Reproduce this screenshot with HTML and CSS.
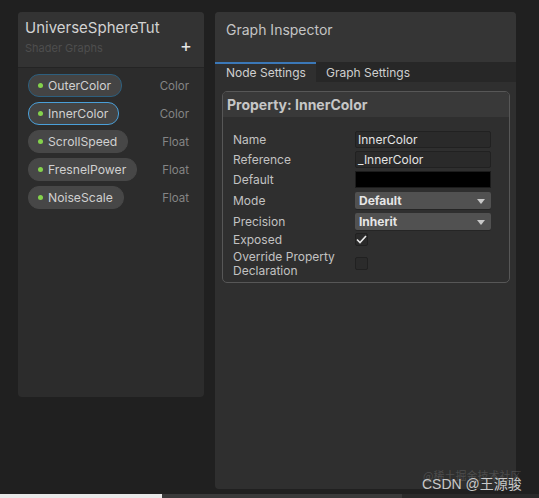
FILE: index.html
```html
<!DOCTYPE html>
<html>
<head>
<meta charset="utf-8">
<link rel="stylesheet" href="styles.css">
</head>
<body>
<div class="stage">
  <div class="blackboard">
    <div class="bb-header">
      <div class="bb-title">UniverseSphereTut</div>
      <div class="bb-sub-row">
        <span class="bb-sub">Shader Graphs</span>
        <span class="bb-add">+</span>
      </div>
    </div>
    <div class="bb-list">
      <div class="prop-row"><span class="pill sel-dim"><i class="dot"></i>OuterColor</span><span class="ptype">Color</span></div>
      <div class="prop-row"><span class="pill sel"><i class="dot"></i>InnerColor</span><span class="ptype">Color</span></div>
      <div class="prop-row"><span class="pill"><i class="dot"></i>ScrollSpeed</span><span class="ptype">Float</span></div>
      <div class="prop-row"><span class="pill"><i class="dot"></i>FresnelPower</span><span class="ptype">Float</span></div>
      <div class="prop-row"><span class="pill"><i class="dot"></i>NoiseScale</span><span class="ptype">Float</span></div>
    </div>
  </div>
  <div class="inspector">
    <div class="in-header">Graph Inspector</div>
    <div class="tabs">
      <div class="tab active">Node Settings</div>
      <div class="tab">Graph Settings</div>
    </div>
    <div class="propbox">
      <div class="pb-title">Property: InnerColor</div>
      <div class="fields">
        <div class="frow"><span class="flabel">Name</span><span class="text-field">InnerColor</span></div>
        <div class="frow"><span class="flabel">Reference</span><span class="text-field">_InnerColor</span></div>
        <div class="frow"><span class="flabel">Default</span><span class="color-field"></span></div>
        <div class="frow drop"><span class="flabel">Mode</span><span class="dropdown">Default<i class="arrow"></i></span></div>
        <div class="frow drop"><span class="flabel">Precision</span><span class="dropdown">Inherit<i class="arrow"></i></span></div>
        <div class="frow short"><span class="flabel">Exposed</span><span class="check"><svg width="11" height="9" viewBox="0 0 11 9"><path d="M1 4.5 L4 7.5 L10 1" fill="none" stroke="#e8e8e8" stroke-width="1.6"/></svg></span></div>
        <div class="frow tall"><span class="flabel">Override Property<br>Declaration</span><span class="check empty"></span></div>
      </div>
    </div>
  </div>
</div>
<div class="watermark"><span class="wm-back">@稀土掘金技术社区</span><span class="wm-front">CSDN @王源骏</span></div>
<div class="bottom-strip"><span class="bs1"></span><span class="bs2"></span><span class="bs3"></span></div>
</body>
</html>
```
FILE: styles.css
```css
html, body {
  margin: 0;
  padding: 0;
  background: #202020;
  font-family: Inter, "Noto Sans", sans-serif;
  width: 539px;
  height: 498px;
  overflow: hidden;
}
body { position: relative; }
.stage {
  display: flex;
  align-items: flex-start;
  gap: 11px;
  padding: 12px 0 0 18px;
  height: 482px;
  box-sizing: border-box;
}
.blackboard {
  width: 186px;
  height: 385px;
  background: #2c2c2c;
  border-radius: 4px;
  display: flex;
  flex-direction: column;
  overflow: hidden;
}
.bb-header {
  background: #333333;
  height: 56px;
  border-bottom: 1px solid #242424;
  padding: 6px 12px 0 7px;
  box-sizing: border-box;
}
.bb-title {
  color: #d2d2d2;
  font-size: 15px;
  line-height: 20px;
}
.bb-sub-row {
  display: flex;
  justify-content: space-between;
  align-items: center;
  margin-top: 2px;
}
.bb-sub {
  color: #4e4e4e;
  font-size: 11px;
}
.bb-add {
  color: #e6e6e6;
  font-size: 18px;
  line-height: 20px;
  margin-top: -4px;
}
.bb-list {
  padding: 6px 15px 0 9px;
  display: flex;
  flex-direction: column;
  gap: 5px;
}
.prop-row {
  display: flex;
  justify-content: space-between;
  align-items: center;
  height: 23px;
}
.pill {
  display: inline-flex;
  align-items: center;
  height: 21px;
  padding: 0 10px 0 9px;
  background: #474747;
  border-radius: 11px;
  color: #d0d0d0;
  font-size: 12.2px;
  border: 1px solid #474747;
  margin-left: 1px;
}
.pill.sel-dim { border-color: #2d5f7e; background: #444; }
.pill.sel { border-color: #4a9fd8; background: #444; }
.dot {
  width: 5px;
  height: 5px;
  border-radius: 50%;
  background: #84d24c;
  margin-right: 5px;
}
.ptype {
  color: #858585;
  font-size: 11.5px;
}
.inspector {
  width: 301px;
  height: 477px;
  background: #2f2f2f;
  border-radius: 4px;
  overflow: hidden;
}
.in-header {
  height: 50px;
  background: #353535;
  color: #c4c4c4;
  font-size: 14px;
  padding: 9px 0 0 11px;
  box-sizing: border-box;
}
.tabs {
  display: flex;
  height: 20px;
  background: #272727;
}
.tab {
  color: #cfcfcf;
  font-size: 12px;
  line-height: 20px;
  padding: 1px 10px 0;
  box-sizing: border-box;
  height: 20px;
}
.tab.active {
  width: 101px;
  background: #2f2f2f;
  border-top: 2px solid #3b78b8;
  line-height: 18px;
  padding: 0 0 0 11px;
}
.propbox {
  margin: 9px 6px 0 7px;
  border: 1px solid #575757;
  border-radius: 5px;
  height: 192px;
  box-sizing: border-box;
}
.pb-title {
  background: #393939;
  height: 25px;
  border-radius: 4px 4px 0 0;
  color: #c6c6c6;
  font-weight: 700;
  font-size: 14px;
  line-height: 25px;
  padding-left: 4px;
}
.fields {
  padding: 14px 18px 0 10px;
  display: flex;
  flex-direction: column;
  gap: 3px;
}
.frow {
  display: flex;
  align-items: center;
  height: 17px;
}
.frow.drop { margin-top: 1px; }
.frow.short { height: 13px; }
.frow.tall { height: 30px; align-items: flex-start; margin-top: 1px; }
.flabel {
  width: 122px;
  color: #c2c2c2;
  font-size: 12px;
  line-height: 14px;
}
.text-field {
  flex: 1;
  height: 17px;
  background: #2a2a2a;
  border: 1px solid #212121;
  border-radius: 2px;
  box-sizing: border-box;
  color: #e4e4e4;
  font-size: 12px;
  line-height: 16px;
  padding-left: 2px;
}
.color-field {
  flex: 1;
  height: 17px;
  background: #000;
  border: 1px solid #1c1c1c;
  box-sizing: border-box;
}
.dropdown {
  position: relative;
  flex: 1;
  height: 17px;
  background: #515151;
  border-radius: 2px;
  color: #e6e6e6;
  font-weight: 700;
  font-size: 12px;
  line-height: 17px;
  padding-left: 4px;
  box-shadow: 0 1px 0 #252525;
}
.arrow {
  position: absolute;
  right: 6px;
  top: 7px;
  width: 0;
  height: 0;
  border-left: 4px solid transparent;
  border-right: 4px solid transparent;
  border-top: 5px solid #c8c8c8;
}
.check {
  width: 13px;
  height: 13px;
  background: #2a2a2a;
  border: 1px solid #212121;
  border-radius: 2px;
  box-sizing: border-box;
  display: flex;
  align-items: center;
  justify-content: center;
}
.check.empty { margin-top: 7px; background: #2b2b2b; }
.watermark {
  position: absolute;
  left: 420px;
  top: 468px;
  width: 104px;
  height: 24px;
}
.wm-back {
  position: absolute;
  left: 3px;
  top: 0;
  font-family: "Noto Sans CJK SC", sans-serif;
  font-size: 11px;
  line-height: 14px;
  color: rgba(150,150,150,0.3);
}
.wm-front {
  position: absolute;
  left: 2px;
  top: 5px;
  font-family: "Liberation Sans", "Noto Sans CJK SC", sans-serif;
  font-size: 14px;
  color: #c9c9c9;
}
.bottom-strip {
  display: flex;
  height: 4px;
  margin-top: 12px;
}
.bs1 { width: 162px; background: #e8e8e8; }
.bs2 { width: 240px; background: #3a3a3a; }
.bs3 { flex: 1; background: #2a2a2a; }
```
